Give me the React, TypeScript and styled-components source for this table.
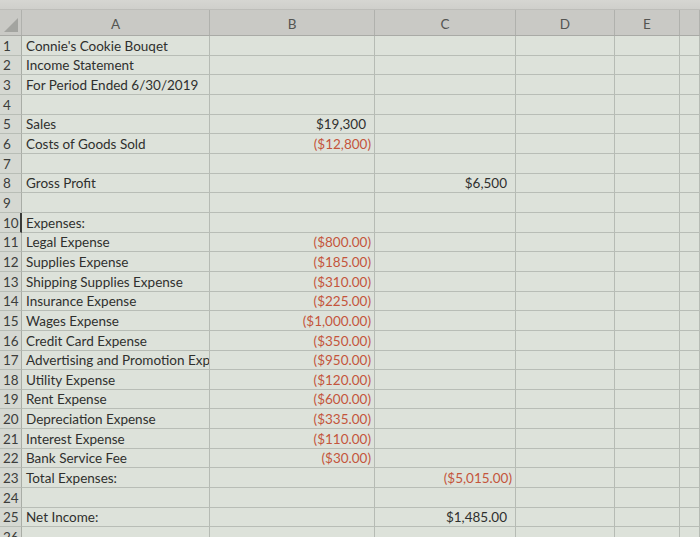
import React from "react";
import styled, { createGlobalStyle } from "styled-components";

const Global = createGlobalStyle`
  html, body { margin: 0; padding: 0; background: #dde2da; }
  body { font-family: Lato, "Liberation Sans", sans-serif; overflow: hidden; }
`;

const COLS = "22px 188px 165px 141px 99px 65px 1fr";
const ROW_H = 19.67;

const Page = styled.div`
  width: 700px;
  height: 537px;
  overflow: hidden;
  background: #dde2da;
  display: flex;
  flex-direction: column;
`;

const TopEdge = styled.div`
  height: 9px;
  flex: none;
  background: linear-gradient(180deg, #d6d6d2 0%, #cfcfcb 100%);
  border-bottom: 1px solid #bdbdb9;
`;

const Grid = styled.div`
  display: grid;
  grid-template-columns: ${COLS};
  grid-auto-rows: ${ROW_H}px;
`;

const HeaderRow = styled.div`
  display: grid;
  grid-template-columns: ${COLS};
  height: 25px;
  flex: none;
  background: #c9c9c5;
  border-bottom: 1px solid #a9aaa6;
`;

const Corner = styled.div`
  display: flex;
  align-items: flex-end;
  justify-content: flex-end;
  padding: 0 3px 3px 0;
  border-right: 1px solid #b0b1ad;
  &::after {
    content: "";
    width: 0;
    height: 0;
    border-left: 14px solid transparent;
    border-bottom: 14px solid #a3a4a0;
  }
`;

const ColHead = styled.div`
  display: flex;
  align-items: center;
  justify-content: center;
  padding-top: 2px;
  font-size: 13.5px;
  color: #545552;
  border-right: 1px solid #b0b1ad;
`;

const RowNum = styled.div<{ $active?: boolean }>`
  display: flex;
  align-items: flex-end;
  padding: 0 0 1px 3px;
  font-size: 13.5px;
  color: #3c3d3b;
  background: #d5d8d2;
  border-bottom: 1px solid #b8bdb6;
  border-right: ${(p) => (p.$active ? "2px solid #3a3b38" : "1px solid #a9ada6")};
  box-sizing: border-box;
`;

const Cell = styled.div<{ $align?: "left" | "right"; $neg?: boolean; $padded?: boolean }>`
  display: flex;
  align-items: flex-end;
  justify-content: ${(p) => (p.$align === "right" ? "flex-end" : "flex-start")};
  padding: ${(p) =>
    p.$align === "right" ? `0 ${p.$padded ? 8 : 3}px 1px 0` : "0 0 1px 4px"};
  font-size: 13.5px;
  color: ${(p) => (p.$neg ? "#c4553c" : "#2f302e")};
  white-space: nowrap;
  overflow: hidden;
  border-right: 1px solid #b6bbb4;
  border-bottom: 1px solid #b8bdb6;
  box-sizing: border-box;
  min-width: 0;
`;

type Val = { text: string; neg?: boolean };
type Row = { label?: string; b?: Val; c?: Val };

const rows: Row[] = [
  { label: "Connie's Cookie Bouqet" },
  { label: "Income Statement" },
  { label: "For Period Ended 6/30/2019" },
  {},
  { label: "Sales", b: { text: "$19,300" } },
  { label: "Costs of Goods Sold", b: { text: "($12,800)", neg: true } },
  {},
  { label: "Gross Profit", c: { text: "$6,500" } },
  {},
  { label: "Expenses:" },
  { label: "Legal Expense", b: { text: "($800.00)", neg: true } },
  { label: "Supplies Expense", b: { text: "($185.00)", neg: true } },
  { label: "Shipping Supplies Expense", b: { text: "($310.00)", neg: true } },
  { label: "Insurance Expense", b: { text: "($225.00)", neg: true } },
  { label: "Wages Expense", b: { text: "($1,000.00)", neg: true } },
  { label: "Credit Card Expense", b: { text: "($350.00)", neg: true } },
  { label: "Advertising and Promotion Expense", b: { text: "($950.00)", neg: true } },
  { label: "Utility Expense", b: { text: "($120.00)", neg: true } },
  { label: "Rent Expense", b: { text: "($600.00)", neg: true } },
  { label: "Depreciation Expense", b: { text: "($335.00)", neg: true } },
  { label: "Interest Expense", b: { text: "($110.00)", neg: true } },
  { label: "Bank Service Fee", b: { text: "($30.00)", neg: true } },
  { label: "Total Expenses:", c: { text: "($5,015.00)", neg: true } },
  {},
  { label: "Net Income:", c: { text: "$1,485.00" } },
  {},
];

const ValueCell = ({ v }: { v?: Val }) => (
  <Cell $align="right" $neg={v?.neg} $padded={!!v && !v.neg}>
    {v?.text}
  </Cell>
);

export default function App() {
  return (
    <Page>
      <Global />
      <TopEdge />
      <HeaderRow>
        <Corner />
        {["A", "B", "C", "D", "E", ""].map((l, i) => (
          <ColHead key={i}>{l}</ColHead>
        ))}
      </HeaderRow>
      <Grid>
        {rows.map((r, i) => (
          <React.Fragment key={i}>
            <RowNum $active={i === 9}>{i + 1}</RowNum>
            <Cell>{r.label}</Cell>
            <ValueCell v={r.b} />
            <ValueCell v={r.c} />
            <Cell />
            <Cell />
            <Cell />
          </React.Fragment>
        ))}
      </Grid>
    </Page>
  );
}
